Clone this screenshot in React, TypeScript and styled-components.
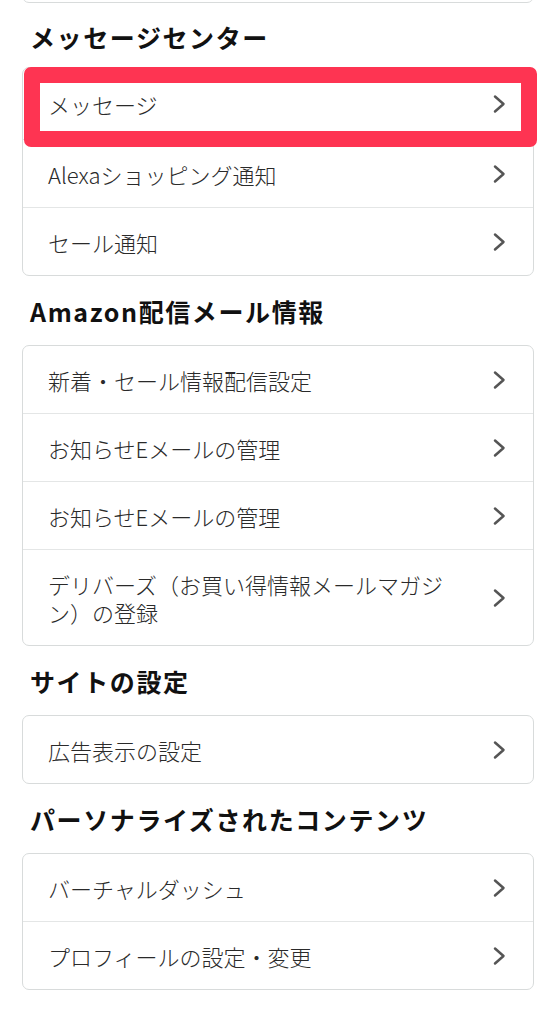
import styled, { createGlobalStyle } from "styled-components";

const GlobalStyle = createGlobalStyle`
  body {
    margin: 0;
    background: #ffffff;
    font-family: "Noto Sans CJK JP", "Noto Sans", sans-serif;
    color: #111111;
  }
`;

const Page = styled.div`
  width: 556px;
  height: 1024px;
  overflow: hidden;
  padding: 0 22px;
  box-sizing: border-box;
`;

const Card = styled.div<{ $stub?: boolean }>`
  border: 1px solid #d8dbdb;
  border-radius: 7px;
  background: #fff;
  margin-top: ${(p) => (p.$stub ? "-66px" : "0")};
`;

const Heading = styled.h2<{ $first?: boolean }>`
  margin: ${(p) => (p.$first ? "16px 0 12px 8px" : "17px 0 16px 8px")};
  font-size: 25px;
  font-weight: 700;
  line-height: 36px;
  letter-spacing: 1.6px;
  color: #111;
`;

const Row = styled.div<{ $highlight?: boolean }>`
  position: relative;
  display: flex;
  align-items: center;
  justify-content: space-between;
  padding: ${(p) => (p.$highlight ? "22px 27px 21px 25px" : "20px 27px 19px 25px")};
  box-sizing: border-box;
  border-top: 1px solid #e4e6e6;

  &:first-child {
    border-top: none;
  }

  ${(p) =>
    p.$highlight &&
    `
    &::after {
      content: "";
      position: absolute;
      z-index: 2;
      top: -1px;
      left: 1px;
      right: -4px;
      height: 80px;
      border: 16px solid #fe3452;
      border-radius: 7px;
      box-sizing: border-box;
      pointer-events: none;
    }
  `}
`;

const Label = styled.span`
  font-size: 22px;
  font-weight: 300;
  line-height: 28px;
  min-height: 28px;
  color: #2a2a2a;
  max-width: 400px;
`;

const Chevron = () => (
  <svg width="13" height="20" viewBox="0 0 13 20">
    <polyline
      points="2,2.5 10.5,10 2,17.5"
      fill="none"
      stroke="#555"
      strokeWidth="2.5"
      strokeLinecap="round"
      strokeLinejoin="round"
    />
  </svg>
);

const sections = [
  {
    title: "メッセージセンター",
    items: ["メッセージ", "Alexaショッピング通知", "セール通知"],
  },
  {
    title: "Amazon配信メール情報",
    items: [
      "新着・セール情報配信設定",
      "お知らせEメールの管理",
      "お知らせEメールの管理",
      "デリバーズ（お買い得情報メールマガジン）の登録",
    ],
  },
  { title: "サイトの設定", items: ["広告表示の設定"] },
  {
    title: "パーソナライズされたコンテンツ",
    items: ["バーチャルダッシュ", "プロフィールの設定・変更"],
  },
];

export default function App() {
  return (
    <Page>
      <GlobalStyle />
      <Card $stub>
        <Row>
          <Label />
        </Row>
      </Card>
      {sections.map((s, si) => (
        <section key={s.title}>
          <Heading $first={si === 0}>{s.title}</Heading>
          <Card>
            {s.items.map((item, i) => (
              <Row key={i} $highlight={si === 0 && i === 0}>
                <Label>{item}</Label>
                <Chevron />
              </Row>
            ))}
          </Card>
        </section>
      ))}
    </Page>
  );
}
